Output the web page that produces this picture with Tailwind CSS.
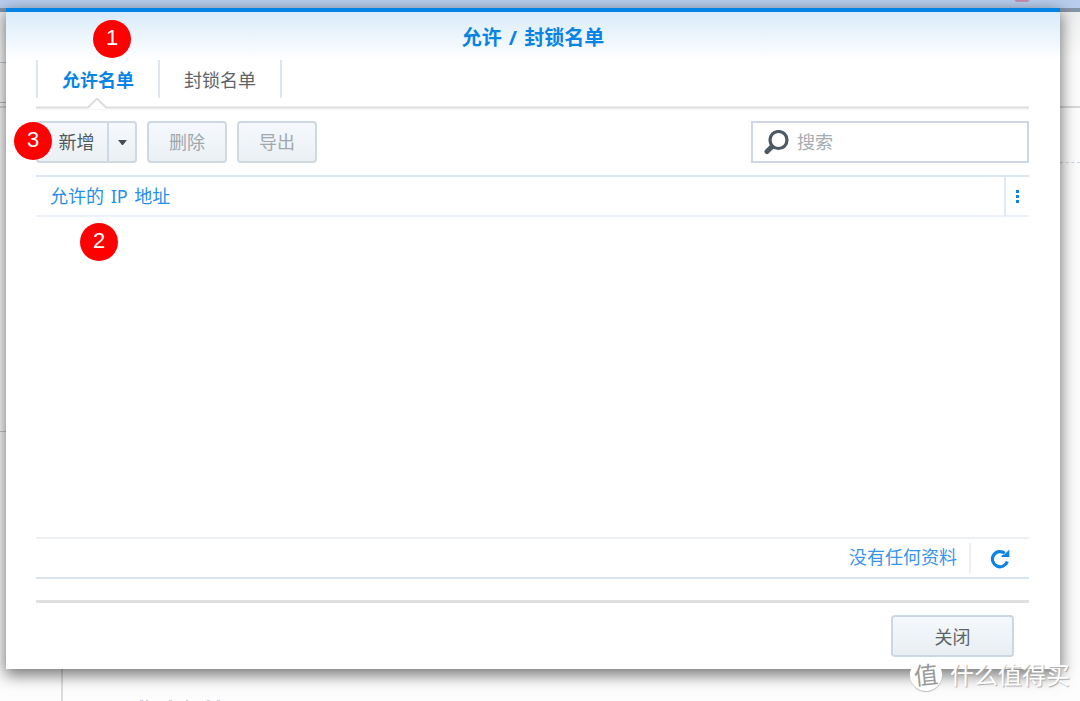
<!DOCTYPE html>
<html lang="zh-CN">
<head>
<meta charset="utf-8">
<meta name="viewport" content="width=device-width, initial-scale=1">
<title>允许 / 封锁名单</title>
<script src="https://cdn.jsdelivr.net/npm/@tailwindcss/browser@4"></script>
</head>
<body class="relative h-screen min-h-[500px] overflow-hidden bg-[#fdfdfd] font-['Noto_Sans','Noto_Sans_CJK_SC',sans-serif] text-lg text-[#5d6468]">
  <!-- page behind the dialog -->
  <div class="absolute inset-0" aria-hidden="true">
    <div class="h-2 bg-[#b9ceee]"></div>
    <div class="h-1 bg-[#8795a9]"></div>
    <div class="h-24 border-b-2 border-[#d9d9d9] bg-linear-to-b from-[#eeeff0] to-[#fdfdfd] to-50%"></div>
    <div class="absolute left-0 top-[62px] h-px w-2 bg-[#c3ccd8]"></div>
    <div class="absolute left-0 top-[102px] h-px w-2 bg-[#b5c0cc]"></div>
    <div class="absolute left-0 top-[431px] h-px w-2 bg-[#c3ccd8]"></div>
    <div class="absolute right-0 top-[162px] w-5 border-t border-dashed border-[#ccd5e0]"></div>
    <div class="absolute bottom-0 left-[61px] h-9 w-0.5 bg-[#dcdcdc]"></div>
    <svg class="absolute bottom-0 left-[137px] h-px w-[86px]" fill="#c9ccd6"><path d="M3 0h3v1h-3zM9 0h2v1h-2zM32 0h3v1h-3zM49 0h2v1h-2zM70 0h3v1h-3zM80 0h3v1h-3z"/></svg>
    <div class="absolute -top-1.5 right-[50px] h-2 w-4 rounded-full bg-[#c58fae]"></div>
  </div>

  <div class="flex h-full flex-col pt-2 pr-5 pb-8 pl-1.5">
    <section role="dialog" aria-labelledby="title" class="relative flex flex-1 flex-col border-t-4 border-[#0583e5] bg-white shadow-[0_5px_15px_1px_rgba(0,0,0,0.55)]">
      <header class="flex h-12 items-center justify-center bg-linear-to-b from-[#d8ebf9] to-white">
        <h1 id="title" class="pt-1 text-xl font-bold text-[#0884e4]">允许<span class="mx-0.5"> / </span>封锁名单</h1>
      </header>

      <div class="flex flex-1 flex-col pr-[31px] pl-[30px]">
        <nav class="flex h-[38px]">
          <button class="border-l-2 border-[#dbe6f1] px-6 pt-0.5 font-bold text-[#0884e4]">允许名单</button>
          <button class="border-x-2 border-[#dbe6f1] px-6 pt-0.5">封锁名单</button>
        </nav>
        <svg class="h-3 w-full" aria-hidden="true">
          <path d="M0 9.500H52L61 0.500L70 9.500H2000" fill="none" stroke="#dcdcdc" stroke-width="2"/>
          <path d="M0 11.500H2000" stroke="#f5f5f5"/>
        </svg>

        <div class="flex h-[42px] mt-[11px] gap-2.5 text-[#a0a8ae]">
          <div class="flex w-[101px] overflow-hidden rounded border-2 border-[#cfd9e3] bg-linear-to-b from-[#f5f9fd] to-[#ebf0f5]">
            <button class="flex-1 pl-2 text-[#4f585e]">新增</button>
            <button class="flex w-7 items-center justify-center border-l-2 border-[#cfd9e3]" aria-label="更多新增选项">
              <svg class="h-[5px] w-[9px]" viewBox="0 0 9 5"><path d="M0 0H9L5 5H4Z" fill="#454e56"/></svg>
            </button>
          </div>
          <button class="w-20 rounded border-2 border-[#cfd9e3] bg-linear-to-b from-[#f5f9fd] to-[#ebf0f5]">删除</button>
          <button class="w-20 rounded border-2 border-[#cfd9e3] bg-linear-to-b from-[#f5f9fd] to-[#ebf0f5]">导出</button>
          <label class="ml-auto flex w-[278px] items-center border-2 border-[#cfd8e2] bg-white pl-[11px]">
            <svg class="size-[25px] shrink-0" viewBox="0 0 25 25" fill="none" stroke="#4c5862" aria-hidden="true">
              <circle cx="14.500" cy="10" r="8.500" stroke-width="3.200"/>
              <path d="M8.500 16L6.500 18" stroke-width="4"/>
              <path d="M6.800 17.700L3 21.500" stroke-width="5" stroke-linecap="round"/>
            </svg>
            <input type="search" aria-label="搜索" placeholder="搜索" class="w-full min-w-0 bg-transparent pl-2 outline-none placeholder:text-[#a5adb4]">
          </label>
        </div>

        <table class="mt-3 w-full border-b-2 border-[#edf3f8]">
          <thead>
            <tr class="h-10 border-t-2 border-[#dde6f0]">
              <th scope="col" class="pl-3.5 text-left font-normal text-[#2590ea]">允许的<span class="mx-0.5"> IP </span>地址</th>
              <th scope="col" class="w-6 border-l-2 border-[#e1ebf5] p-0">
                <button class="flex h-9 w-full items-center justify-center" aria-label="列选项">
                  <svg class="h-[13px] w-[3px]" viewBox="0 0 3 13" fill="#0884e4"><path d="M0 0h3v3H0zM0 5h3v3H0zM0 10h3v3H0z"/></svg>
                </button>
              </th>
            </tr>
          </thead>
        </table>

        <div class="flex-1"></div>

        <div class="flex h-[42px] items-center justify-end border-t-2 border-b-2 border-t-[#eef1f4] border-b-[#dae5f0] text-[#3795ea]">
          <span class="pb-0.5">没有任何资料</span>
          <span class="ml-3 h-[30px] w-0.5 bg-[#edf0f5]"></span>
          <button class="mr-[19px] ml-[19px] pt-0.5" aria-label="刷新">
            <svg class="size-5" viewBox="0 0 20 20" aria-hidden="true">
              <path d="M17.300 12.500A7.600 7.600 0 1 1 14.800 4.200" fill="none" stroke="#0884e4" stroke-width="3.200"/>
              <path d="M19.300 0.500V8H11.500V6.500L14.500 5.500Z" fill="#0884e4"/>
            </svg>
          </button>
        </div>

        <footer class="mt-[21px] flex justify-end border-t-3 border-[#e0e0e0] pt-3 pr-[15px] pb-3">
          <button class="h-[42px] w-[123px] rounded border-2 border-[#ccd7e1] bg-linear-to-b from-[#f5f9fd] to-[#e9eef3] pt-0.5 text-[#5d6468]">关闭</button>
        </footer>
      </div>

    </section>
  </div>

  <!-- numbered callouts -->
  <div class="font-['Liberation_Sans',sans-serif] text-[22px] leading-9 text-white">
    <span class="absolute left-[93px] top-5 size-[38px] rounded-full bg-[#fe0000] text-center">1</span>
    <span class="absolute left-20 top-[223px] size-[38px] rounded-full bg-[#fe0000] text-center">2</span>
    <span class="absolute left-3.5 top-[122px] size-[38px] rounded-full bg-[#fe0000] text-center">3</span>
  </div>

  <!-- watermark -->
  <div class="absolute right-2.5 bottom-2.5 flex items-center gap-2 text-[24px] leading-8 text-white [text-shadow:1px_1px_1px_#aaa]">
    <span class="flex size-8 -rotate-6 items-center justify-center rounded-full bg-white text-[24px] text-[#999] shadow-[0_1px_1px_#bbb] [text-shadow:none]">值</span>
    <span>什么值得买</span>
  </div>
</body>
</html>
